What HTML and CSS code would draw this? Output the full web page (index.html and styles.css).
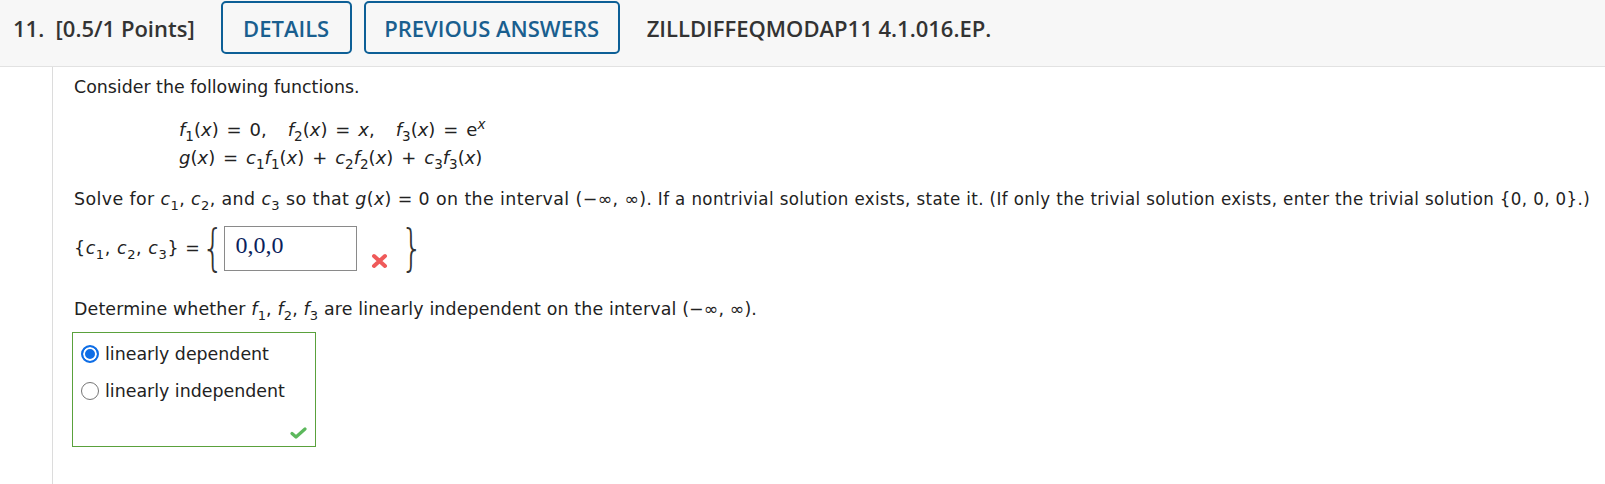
FILE: index.html
```html
<!DOCTYPE html>
<html>
<head>
<meta charset="utf-8">
<link rel="stylesheet" href="styles.css">
</head>
<body>
<div class="header">
  <div class="qnum">11.&nbsp; [0.5/1 Points]</div>
  <button class="btn btn-details">DETAILS</button>
  <button class="btn btn-prev">PREVIOUS ANSWERS</button>
  <div class="qid">ZILLDIFFEQMODAP11 4.1.016.EP.</div>
</div>
<div class="main">
  <div class="gutter"></div>
  <div class="content">
    <p class="line intro">Consider the following functions.</p>
    <div class="math-block">
      <div class="mline"><span class="v">f</span><sub>1</sub>(<span class="v">x</span>) = 0,<span class="sp"></span><span class="v">f</span><sub>2</sub>(<span class="v">x</span>) = <span class="v">x</span>,<span class="sp"></span><span class="v">f</span><sub>3</sub>(<span class="v">x</span>) = e<sup class="v">x</sup></div>
      <div class="mline"><span class="v">g</span>(<span class="v">x</span>) = <span class="v">c</span><sub>1</sub><span class="v">f</span><sub>1</sub>(<span class="v">x</span>) + <span class="v">c</span><sub>2</sub><span class="v">f</span><sub>2</sub>(<span class="v">x</span>) + <span class="v">c</span><sub>3</sub><span class="v">f</span><sub>3</sub>(<span class="v">x</span>)</div>
    </div>
    <p class="line solve">Solve for <span class="v">c</span><sub>1</sub>, <span class="v">c</span><sub>2</sub>, and <span class="v">c</span><sub>3</sub> so that <span class="v">g</span>(<span class="v">x</span>) = 0 on the interval (−∞, ∞)<span class="cond">. If a nontrivial solution exists, state it. (If only the trivial solution exists, enter the trivial solution {0, 0, 0}.)</span></p>
    <div class="answer-row">
      <span class="lhs">{<span class="v">c</span><sub>1</sub>, <span class="v">c</span><sub>2</sub>, <span class="v">c</span><sub>3</sub>} =</span>
      <span class="brace"><span class="glyph">{</span></span>
      <span class="input">0,0,0</span>
      <svg class="xmark" width="17" height="16" viewBox="0 0 17 16"><path d="M3 3 L14 13 M14 3 L3 13" stroke="#ef5a5a" stroke-width="4" stroke-linecap="round"/></svg>
      <span class="brace brace-r"><span class="glyph">}</span></span>
    </div>
    <p class="line determine">Determine whether <span class="v">f</span><sub>1</sub>, <span class="v">f</span><sub>2</sub>, <span class="v">f</span><sub>3</sub> are linearly independent on the interval (−∞, ∞).</p>
    <div class="choices">
      <label class="choice"><span class="radio checked"></span>linearly dependent</label>
      <label class="choice"><span class="radio"></span>linearly independent</label>
      <svg class="check" width="17" height="12" viewBox="0 0 17 12"><path d="M2 6.5 L6 10 L15 2" fill="none" stroke="#5cb85c" stroke-width="3.2" stroke-linecap="round" stroke-linejoin="round"/></svg>
    </div>
  </div>
</div>
</body>
</html>
```
FILE: styles.css
```css
* { box-sizing: border-box; }
body {
  margin: 0;
  background: #fff;
  font-family: "DejaVu Sans", Verdana, sans-serif;
  color: #222;
}
.header {
  height: 67px;
  background: #f7f7f7;
  border-bottom: 1px solid #e2e2e2;
  display: flex;
  align-items: flex-start;
  padding: 1px 0 0 13px;
  font-family: "Open Sans", sans-serif;
  font-weight: 600;
  font-size: 22px;
}
.qnum, .qid {
  height: 53px;
  display: flex;
  align-items: center;
  color: #333;
}
.qnum { margin-right: 26px; }
.qid { margin-left: 27px; }
.btn {
  flex-shrink: 0;
  height: 53px;
  border: 2px solid #0d5f96;
  border-radius: 5px;
  background: transparent;
  color: #1a5f8f;
  font-family: "Open Sans", sans-serif;
  font-weight: 600;
  font-size: 22px;
  padding: 0;
}
.btn-details { width: 131px; margin-right: 12px; }
.btn-prev { width: 256px; }
.main {
  display: flex;
}
.gutter {
  width: 53px;
  border-right: 1px solid #dcdcdc;
  height: 420px;
  flex-shrink: 0;
}
.content {
  padding-left: 21px;
  font-size: 17.4px;
}
.line { margin: 0; }
.v { font-style: italic; }
sub, sup { font-size: 75%; line-height: 0; }
sub { vertical-align: -5px; }
.intro { margin-top: 10px; }
.math-block {
  margin: 19px 0 0 105px;
  font-size: 18px;
  word-spacing: 2.2px;
}
.mline { line-height: 28px; }
.sp { display: inline-block; width: 21px; }
.solve { margin-top: 16px; letter-spacing: 0.4px; }
.cond {
  font-family: "DejaVu Sans Condensed", "DejaVu Sans", sans-serif;
  font-size: 18.5px;
  letter-spacing: 0.4px;
}
.answer-row {
  display: flex;
  align-items: center;
  margin-top: 14px;
  height: 50px;
}
.lhs { letter-spacing: 0.6px; margin-right: 4px; }
.brace {
  display: flex;
  justify-content: center;
  width: 16px;
  flex-shrink: 0;
}
.glyph {
  font-family: "DejaVu Sans", sans-serif;
  font-weight: 200;
  font-size: 50px;
  line-height: 50px;
  color: #333;
  transform: scaleX(0.7);
}
.input {
  width: 133px;
  height: 45px;
  border: 1px solid #8a8a8a;
  font-family: "Liberation Serif", serif;
  font-size: 24px;
  color: #0b1f5c;
  padding: 5px 0 0 10px;
  margin-left: 4px;
  flex-shrink: 0;
}
.xmark { margin: 26px 0 0 14px; flex-shrink: 0; }
.brace-r { margin-left: 15px; }
.determine { margin-top: 26px; letter-spacing: 0.15px; }
.choices {
  position: relative;
  width: 244px;
  height: 115px;
  margin: 13px 0 0 -2px;
  border: 1px solid #5aa13c;
  padding-top: 2px;
}
.choice {
  display: flex;
  align-items: center;
  height: 37px;
  padding-left: 8px;
}
.radio {
  width: 18px;
  height: 18px;
  border: 1px solid #767676;
  border-radius: 50%;
  margin-right: 6px;
  background: #fff;
}
.radio.checked {
  border: 2px solid #0f6ee6;
  box-shadow: inset 0 0 0 2px #fff;
  background: #0f6ee6;
}
.check {
  position: absolute;
  right: 8px;
  bottom: 7px;
}
```
